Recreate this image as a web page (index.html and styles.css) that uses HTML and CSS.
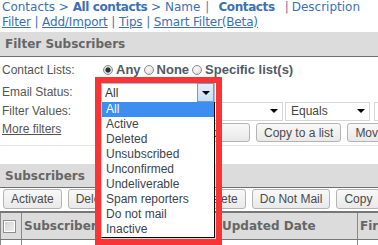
FILE: index.html
```html
<!DOCTYPE html>
<html lang="en">

<head>
    <meta charset="UTF-8">
    <meta name="viewport" content="width=device-width, initial-scale=1.0">
    <title>Contacts</title>

    <link rel="stylesheet" href="styles.css">
</head>

<body>
    <div class="crumbs">
        <a href="#">Contacts</a> &gt; <a href="#"><b>All contacts</b></a> &gt; <a href="#">Name</a><span class="sep">|</span><b class="cur">Contacts</b><span class="sep last">|</span><a href="#">Description</a>
    </div>
    <div class="tabs">
        <a href="#">Filter</a> | <a href="#">Add/Import</a> | <a href="#">Tips</a> | <a href="#">Smart Filter(Beta)</a>
    </div>

    <div class="box filter">
        <div class="box-head">Filter Subscribers</div>
        <div class="box-body">
            <div class="row">
                <span class="label">Contact Lists:</span>
                <label class="opt"><input type="radio" name="lists" checked> Any</label>
                <label class="opt"><input type="radio" name="lists"> None</label>
                <label class="opt"><input type="radio" name="lists"> Specific list(s)</label>
            </div>
            <div class="row">
                <span class="label">Email Status:</span>
                <div class="status">
                    <div class="status-box">All<span class="status-btn"><i class="caret"></i></span></div>
                    <ul class="status-list">
                        <li class="on">All</li>
                        <li>Active</li>
                        <li>Deleted</li>
                        <li>Unsubscribed</li>
                        <li>Unconfirmed</li>
                        <li>Undeliverable</li>
                        <li>Spam reporters</li>
                        <li>Do not mail</li>
                        <li>Inactive</li>
                    </ul>
                </div>
            </div>
            <div class="row">
                <span class="label">Filter Values:</span>
                <div class="select field"><span>Email</span><i class="caret"></i></div>
                <div class="select cond"><span>Equals</span><i class="caret"></i></div>
                <div class="select value"><span></span><i class="caret"></i></div>
            </div>
            <div class="row tools">
                <a href="#" class="label more">More filters</a>
                <div class="btns">
                    <button class="go">Go</button>
                    <button>Copy to a list</button>
                    <button>Move to a list</button>
                </div>
            </div>
        </div>
    </div>

    <div class="box subs">
        <div class="box-head">Subscribers</div>
        <div class="btns actions">
            <button>Activate</button>
            <button>Delete</button>
            <button>Permanently Delete</button>
            <button>Do Not Mail</button>
            <button>Copy</button>
            <button>Move</button>
        </div>
        <table class="grid">
            <thead>
                <tr>
                    <th class="c-check"><input type="checkbox"></th>
                    <th class="c-email">Subscriber Email</th>
                    <th class="c-date">Updated Date</th>
                    <th>First Name</th>
                </tr>
            </thead>
            <tbody>
                <tr>
                    <td class="c-check"></td>
                    <td></td>
                    <td></td>
                    <td></td>
                </tr>
            </tbody>
        </table>
    </div>

    <!-- annotation round the open status menu -->
    <div class="mark"></div>
</body>

</html>
```

FILE: styles.css
```css
* {
    margin: 0;
    padding: 0;
    box-sizing: border-box
}

html,
body {
    overflow: hidden;
}

body {
    width: 378px;
    height: 245px;
    font-family: "Liberation Sans", Arial, sans-serif;
    font-size: 12px;
    color: #555;
    background: #fff;
    position: relative;
}

ul {
    list-style: none
}

a {
    color: #3b70b8;
}

.crumbs,
.tabs {
    font-family: "DejaVu Sans", Verdana, sans-serif;
    font-size: 12px;
    line-height: 15px;
    height: 15px;
    padding-left: 2px;
    color: #3b70b8;
    white-space: nowrap;
}

.tabs {
    letter-spacing: -0.15px;
}

.crumbs a {
    text-decoration: none;
}

.crumbs b {
    letter-spacing: -0.4px;
}

.crumbs .sep {
    color: #8a6a9e;
    margin: 0 4px 0 5px;
}

.crumbs .sep.last {
    margin-right: 3px;
}

.crumbs .cur {
    margin: 0 5px 0 5px;
}

/* boxes */

.box-head {
    height: 25px;
    line-height: 24px;
    padding-left: 5px;
    background: #dcdcdc;
    border-bottom: 1px solid #707070;
    font-family: "DejaVu Sans", Verdana, sans-serif;
    font-weight: bold;
    font-size: 12px;
    color: #666;
    white-space: nowrap;
}

.filter {
    margin-top: 2px;
    border-bottom: 1px solid #e6e6e6;
}

.box-body {
    padding: 3px 0 3px 2px;
}

.row {
    display: flex;
    align-items: center;
    height: 19px;
    white-space: nowrap;
}

.row+.row {
    margin-top: 3px;
}

.row:nth-child(3) {
    margin-top: 0;
}

.label {
    width: 99px;
    flex: none;
    font-size: 12px;
    color: #555;
}

.opt {
    display: flex;
    align-items: center;
    font-weight: bold;
    font-size: 13px;
    color: #505a66;
    margin-right: 3px;
}

.opt input {
    appearance: none;
    -webkit-appearance: none;
    width: 10px;
    height: 10px;
    border-radius: 50%;
    border: 1px solid #8c8c8c;
    background: radial-gradient(circle at 40% 35%, #fff, #d4d4d4);
    margin: 0 3px 0 2px;
}

.opt+.opt input {
    margin-left: 0;
}

.opt input:checked {
    background: radial-gradient(circle, #27313c 0, #27313c 2.2px, #e6e6e6 3px, #c4c4c4 100%);
}

/* email status, shown open */

.status {
    position: relative;
    width: 114px;
    height: 19px;
    margin-top: 2px;
    z-index: 5;
    flex: none;
}

.status-box {
    height: 19px;
    line-height: 19px;
    padding-left: 3px;
    background: #fff;
    border: 1px solid #a9bcd3;
    border-bottom: 0;
    color: #333;
    position: relative;
}

.status-btn {
    position: absolute;
    right: 0;
    top: -1px;
    width: 17px;
    height: 19px;
    border: 1px solid #6f9ccc;
    background: linear-gradient(#e4effb, #c9def3);
    display: flex;
    align-items: center;
    justify-content: center;
}

.caret {
    display: block;
    width: 0;
    height: 0;
    border-left: 4px solid transparent;
    border-right: 4px solid transparent;
    border-top: 4px solid #000;
}

.status-list {
    position: absolute;
    left: 0;
    top: 19px;
    width: 114px;
    background: #fff;
    border: 1px solid #000;
    border-left-color: #c8d4e0;
    border-top: 0;
}

.status-list li {
    height: 15px;
    line-height: 15px;
    padding-left: 4px;
    color: #3c4450;
}

.status-list li.on {
    background: #3c8ff0;
    color: #fff;
}

/* filter values */

.select {
    flex: none;
    height: 19px;
    margin-top: 1px;
    border: 1px solid #d6d6d6;
    background: #fff;
    display: flex;
    align-items: center;
    justify-content: space-between;
    padding: 0 4px 0 5px;
    color: #444;
    font-size: 12px;
}

.select.field {
    width: 182px;
}

.select.cond {
    width: 85px;
    margin-left: 2px;
}

.select.value {
    width: 80px;
    margin-left: 4px;
}

.tools {
    align-items: flex-start;
    height: 19px;
}

.more {
    line-height: 14px;
    margin-top: -1px;
}

.btns {
    display: flex;
    gap: 6px;
}

.tools .btns {
    margin-left: 69px;
}

button {
    height: 19px;
    padding: 0 7px;
    border: 1px solid #b4b4b4;
    border-radius: 3px;
    background: linear-gradient(#f8f8f8, #e9e9e9);
    font-family: "Liberation Sans", Arial, sans-serif;
    font-size: 12px;
    color: #4a4a4a;
    white-space: nowrap;
    flex: none;
}

.tools .go {
    width: 80px;
}

/* subscribers */

.subs {
    margin-top: 18px;
}

.subs .box-head {
    height: 24px;
}

.actions {
    margin: 1px 0 0 3px;
}

.actions button {
    height: 20px;
}

.grid {
    margin-top: 2px;
    border-collapse: collapse;
    border-top: 2px solid #777;
    table-layout: fixed;
    width: 420px;
}

.grid th {
    height: 27px;
    background: #dcdcdc;
    border-bottom: 1px solid #777;
    border-left: 1px solid #888;
    padding: 0 2px;
    text-align: left;
    font-family: "DejaVu Sans", Verdana, sans-serif;
    font-weight: bold;
    font-size: 12px;
    color: #666;
    white-space: nowrap;
    overflow: hidden;
}

.grid td {
    height: 20px;
    border-left: 1px solid #888;
}

.grid .c-check {
    width: 21px;
    padding: 0 0 0 2px;
}

.grid .c-email {
    width: 198px;
}

.grid .c-date {
    width: 138px;
}

.c-check input {
    appearance: none;
    -webkit-appearance: none;
    display: block;
    width: 13px;
    height: 13px;
    margin-top: 2px;
    border: 1px solid #8e8e8e;
    background: linear-gradient(135deg, #cfcfcf, #f4f4f4);
    box-shadow: inset 0 0 0 1px #fff;
}

/* red annotation frame */

.mark {
    position: absolute;
    left: 95px;
    top: 77px;
    width: 127px;
    height: 170px;
    border: 6px solid #fb3334;
    border-bottom-width: 8px;
    z-index: 10;
}
```
